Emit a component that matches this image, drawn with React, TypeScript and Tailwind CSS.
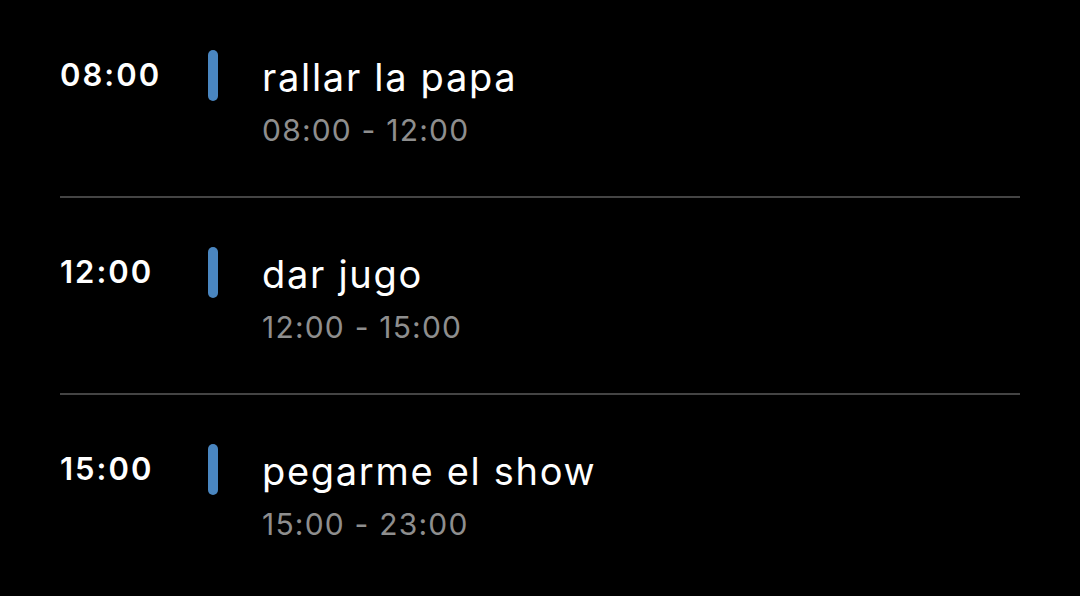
const items = [
  { start: "08:00", end: "12:00", title: "rallar la papa" },
  { start: "12:00", end: "15:00", title: "dar jugo" },
  { start: "15:00", end: "23:00", title: "pegarme el show" },
];

export default function App() {
  return (
    <div className="w-[1080px] h-[596px] bg-black font-['Inter',sans-serif] px-[60px] pt-[1px]">
      {items.map((item, i) => (
        <div
          key={item.start}
          className={`flex h-[197px] pt-[49px] ${i < items.length - 1 ? "border-b-2 border-[#444444]" : ""}`}
        >
          <div className="w-[148px] pt-[9px] text-[31px] font-semibold text-white leading-none tracking-[2px]">
            {item.start}
          </div>
          <div className="w-[10px] h-[51px] rounded-full bg-[#4a86c0]" />
          <div className="pl-[44px]">
            <div className="text-[38px] text-white leading-[56px] -mt-[1px] tracking-[1.7px]">{item.title}</div>
            <div className="text-[30px] text-[#8e8e8e] leading-[40px] mt-[5px] tracking-[1.2px]">
              {item.start} - {item.end}
            </div>
          </div>
        </div>
      ))}
    </div>
  );
}
